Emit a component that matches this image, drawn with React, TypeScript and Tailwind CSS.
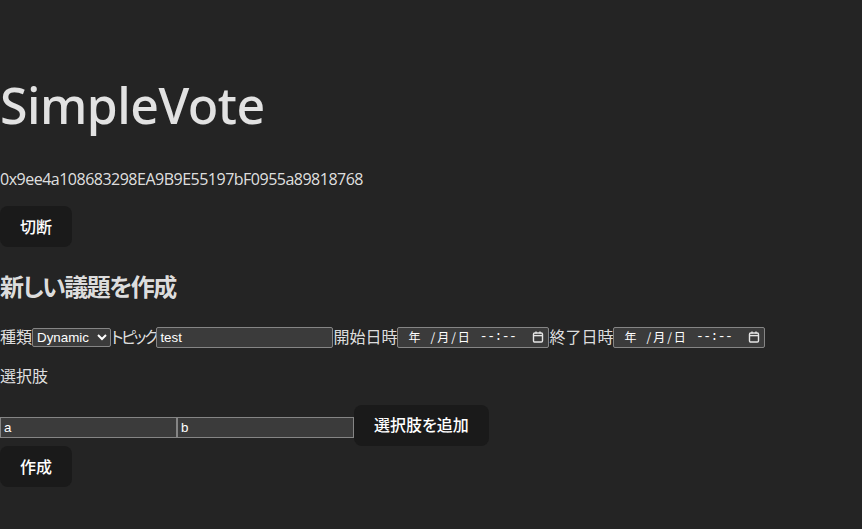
import { useState } from 'react';

const font = "font-['Segoe_UI','Open_Sans','Noto_Sans_CJK_JP',sans-serif]";
const jp = "font-['Segoe_UI','Open_Sans','Noto_Sans_CJK_JP',sans-serif] [font-feature-settings:'palt']";
const field = "border border-[#858585] bg-[#3b3b3b] font-['Liberation_Sans',Arial,sans-serif] text-[13.33px] text-white";

const DateBox = () => (
  <div className={`flex h-[21px] w-[152px] items-center rounded-[2px] pl-[10px] pr-[4px] ${field}`}>
    <span className="font-['Noto_Sans_CJK_JP',sans-serif] text-[12px]">年</span>
    <span className="ml-[10px] font-['Noto_Sans_CJK_JP',sans-serif] text-[12px] tracking-[2px]">/月/日</span>
    <span className="ml-[8px] font-['Liberation_Mono',monospace] text-[13px] tracking-[-0.5px]">--:--</span>
    <svg className="ml-auto" width="12" height="12" viewBox="0 0 12 12" fill="none" stroke="#e5e5e5" strokeWidth="1.4">
      <rect x="1.5" y="2" width="9" height="9" rx="1.2" />
      <line x1="1.5" y1="4.6" x2="10.5" y2="4.6" />
      <line x1="4" y1="0.5" x2="4" y2="2.5" />
      <line x1="8" y1="0.5" x2="8" y2="2.5" />
    </svg>
  </div>
);

const Button = ({ children }: { children: React.ReactNode }) => (
  <button className={`h-[41px] rounded-[8px] border border-transparent bg-[#1a1a1a] px-[19px] text-[16px] font-medium text-white ${jp}`}>
    {children}
  </button>
);

export default function App() {
  const [topic, setTopic] = useState('test');
  const [choices, setChoices] = useState(['a', 'b']);

  return (
    <div className={`min-h-screen bg-[#242424] text-[rgba(255,255,255,0.87)] [color-scheme:dark] ${font}`}>
      <div className="pt-[77px]">
        <h1 className="h-[56px] font-['Noto_Sans','Open_Sans',sans-serif] text-[50px] font-medium leading-[56px] tracking-[-0.5px]">SimpleVote</h1>
        <p className="mt-[34px] text-[16px] leading-[24px] tracking-[-0.5px]">0x9ee4a108683298EA9B9E55197bF0955a89818768</p>
        <div className="mt-[15px]">
          <Button>切断</Button>
        </div>
        <h2 className={`mt-[22px] text-[24px] font-bold leading-[36px] tracking-[-1.5px] ${jp}`}>新しい議題を作成</h2>
        <div className={`mt-[20px] flex h-[24px] items-center text-[16px] ${jp}`}>
          <span>種類</span>
          <select className={`h-[19px] w-[79px] rounded-[2px] ${field}`}>
            <option>Dynamic</option>
          </select>
          <span className="tracking-[-2.2px]">トピック</span>
          <input
            value={topic}
            onChange={(e) => setTopic(e.target.value)}
            className={`h-[21px] w-[177px] rounded-[2px] px-[3px] ${field}`}
          />
          <span>開始日時</span>
          <DateBox />
          <span>終了日時</span>
          <DateBox />
        </div>
        <p className={`mt-[15px] text-[16px] leading-[24px] ${jp}`}>選択肢</p>
        <div className="mt-[16px] flex h-[42px] items-center">
          {choices.map((c, i) => (
            <input
              key={i}
              value={c}
              onChange={(e) => setChoices(choices.map((v, j) => (j === i ? e.target.value : v)))}
              className={`mt-[4px] h-[21px] w-[177px] px-[3px] ${field}`}
            />
          ))}
          <Button>選択肢を追加</Button>
        </div>
        <div>
          <Button>作成</Button>
        </div>
      </div>
    </div>
  );
}
